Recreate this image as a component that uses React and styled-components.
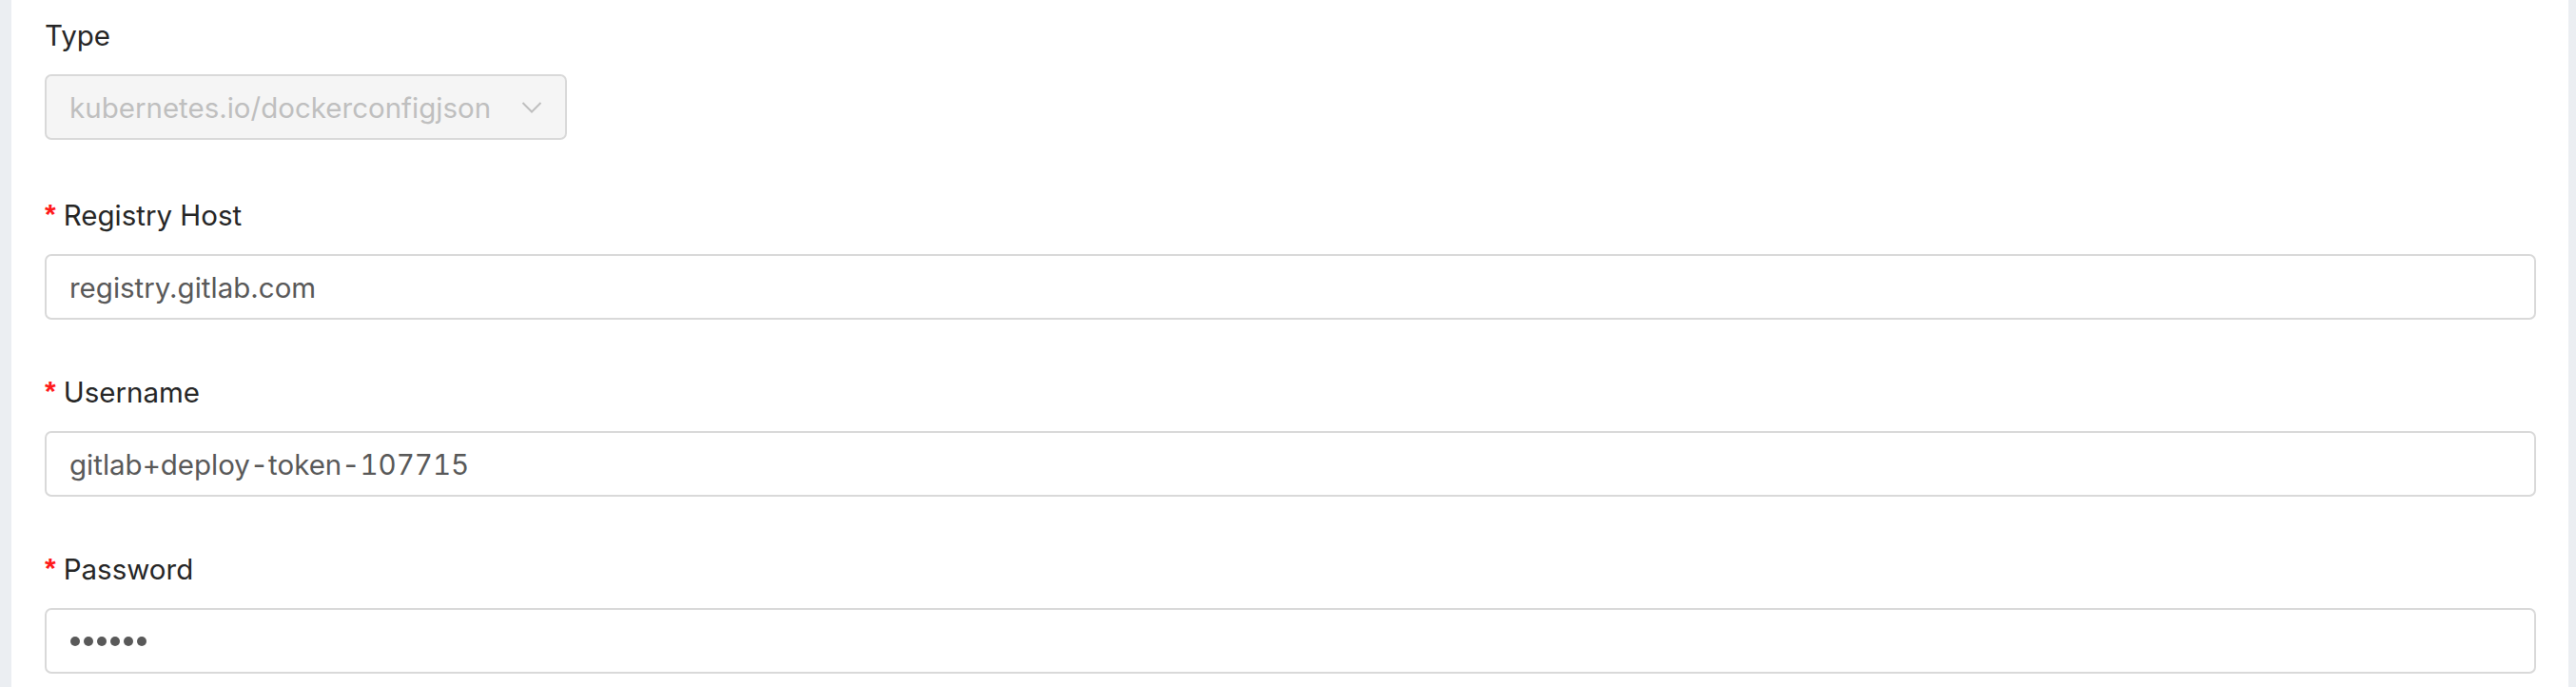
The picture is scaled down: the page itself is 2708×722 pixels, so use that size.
import React from 'react';
import styled, { createGlobalStyle } from 'styled-components';

const GlobalStyle = createGlobalStyle`
  html, body {
    margin: 0;
    padding: 0;
    background: #ebeef2;
  }
  * {
    box-sizing: border-box;
  }
`;

const Page = styled.div`
  width: 2708px;
  height: 722px;
  overflow: hidden;
  background: #ebeef2;
  padding: 0 8px 0 12px;
  font-family: Inter, "Noto Sans", sans-serif;
`;

const Card = styled.div`
  height: 100%;
  background: #fff;
  padding: 20px 34px 0 35px;
`;

const Form = styled.form`
  display: flex;
  flex-direction: column;
`;

const FormItem = styled.div`
  display: flex;
  flex-direction: column;
  margin-bottom: ${(p) => p.$gap || 59}px;
`;

const Label = styled.label`
  height: 34px;
  line-height: 34px;
  margin-bottom: 24px;
  font-size: 29.5px;
  color: #262626;
  display: flex;
  align-items: center;
`;

const Required = styled.span`
  color: #ff1a1a;
  font-size: 30px;
  font-weight: 600;
  margin-right: 8px;
  font-family: "Liberation Sans", sans-serif;
  position: relative;
  top: -1px;
`;

const InputBox = styled.div`
  height: 69px;
  width: ${(p) => (p.$width ? `${p.$width}px` : '100%')};
  border: 2px solid #d9d9d9;
  border-radius: 7px;
  background: ${(p) => (p.$disabled ? '#f5f5f5' : '#fff')};
  display: flex;
  align-items: center;
  padding: 0 24px;
  gap: 16px;
`;

const Value = styled.span`
  flex: 1;
  font-size: 29.5px;
  font-feature-settings: ${(p) => (p.$digits ? '"tnum"' : 'normal')};
  color: ${(p) => (p.$disabled ? '#bfbfbf' : '#595959')};
  white-space: nowrap;
  overflow: hidden;
`;

const Dots = styled.span`
  display: flex;
  gap: 4px;
  padding-left: 1px;
`;

const Dot = styled.i`
  width: 10px;
  height: 10px;
  border-radius: 50%;
  background: #595959;
`;

const Chevron = () => (
  <svg width="22" height="14" viewBox="0 0 22 14" fill="none">
    <path d="M1.5 2 L11 11.5 L20.5 2" stroke="#bfbfbf" strokeWidth="2" />
  </svg>
);

const App = () => {
  return (
    <>
      <GlobalStyle />
      <Page>
        <Card>
          <Form>
            <FormItem $gap={62}>
              <Label>Type</Label>
              <InputBox $width={549} $disabled>
                <Value $disabled>kubernetes.io/dockerconfigjson</Value>
                <Chevron />
              </InputBox>
            </FormItem>

            <FormItem>
              <Label>
                <Required>*</Required>Registry Host
              </Label>
              <InputBox>
                <Value>registry.gitlab.com</Value>
              </InputBox>
            </FormItem>

            <FormItem>
              <Label>
                <Required>*</Required>Username
              </Label>
              <InputBox>
                <Value $digits>gitlab+deploy-token-107715</Value>
              </InputBox>
            </FormItem>

            <FormItem>
              <Label>
                <Required>*</Required>Password
              </Label>
              <InputBox>
                <Dots>
                  {[0, 1, 2, 3, 4, 5].map((i) => (
                    <Dot key={i} />
                  ))}
                </Dots>
              </InputBox>
            </FormItem>
          </Form>
        </Card>
      </Page>
    </>
  );
};

export default App;
